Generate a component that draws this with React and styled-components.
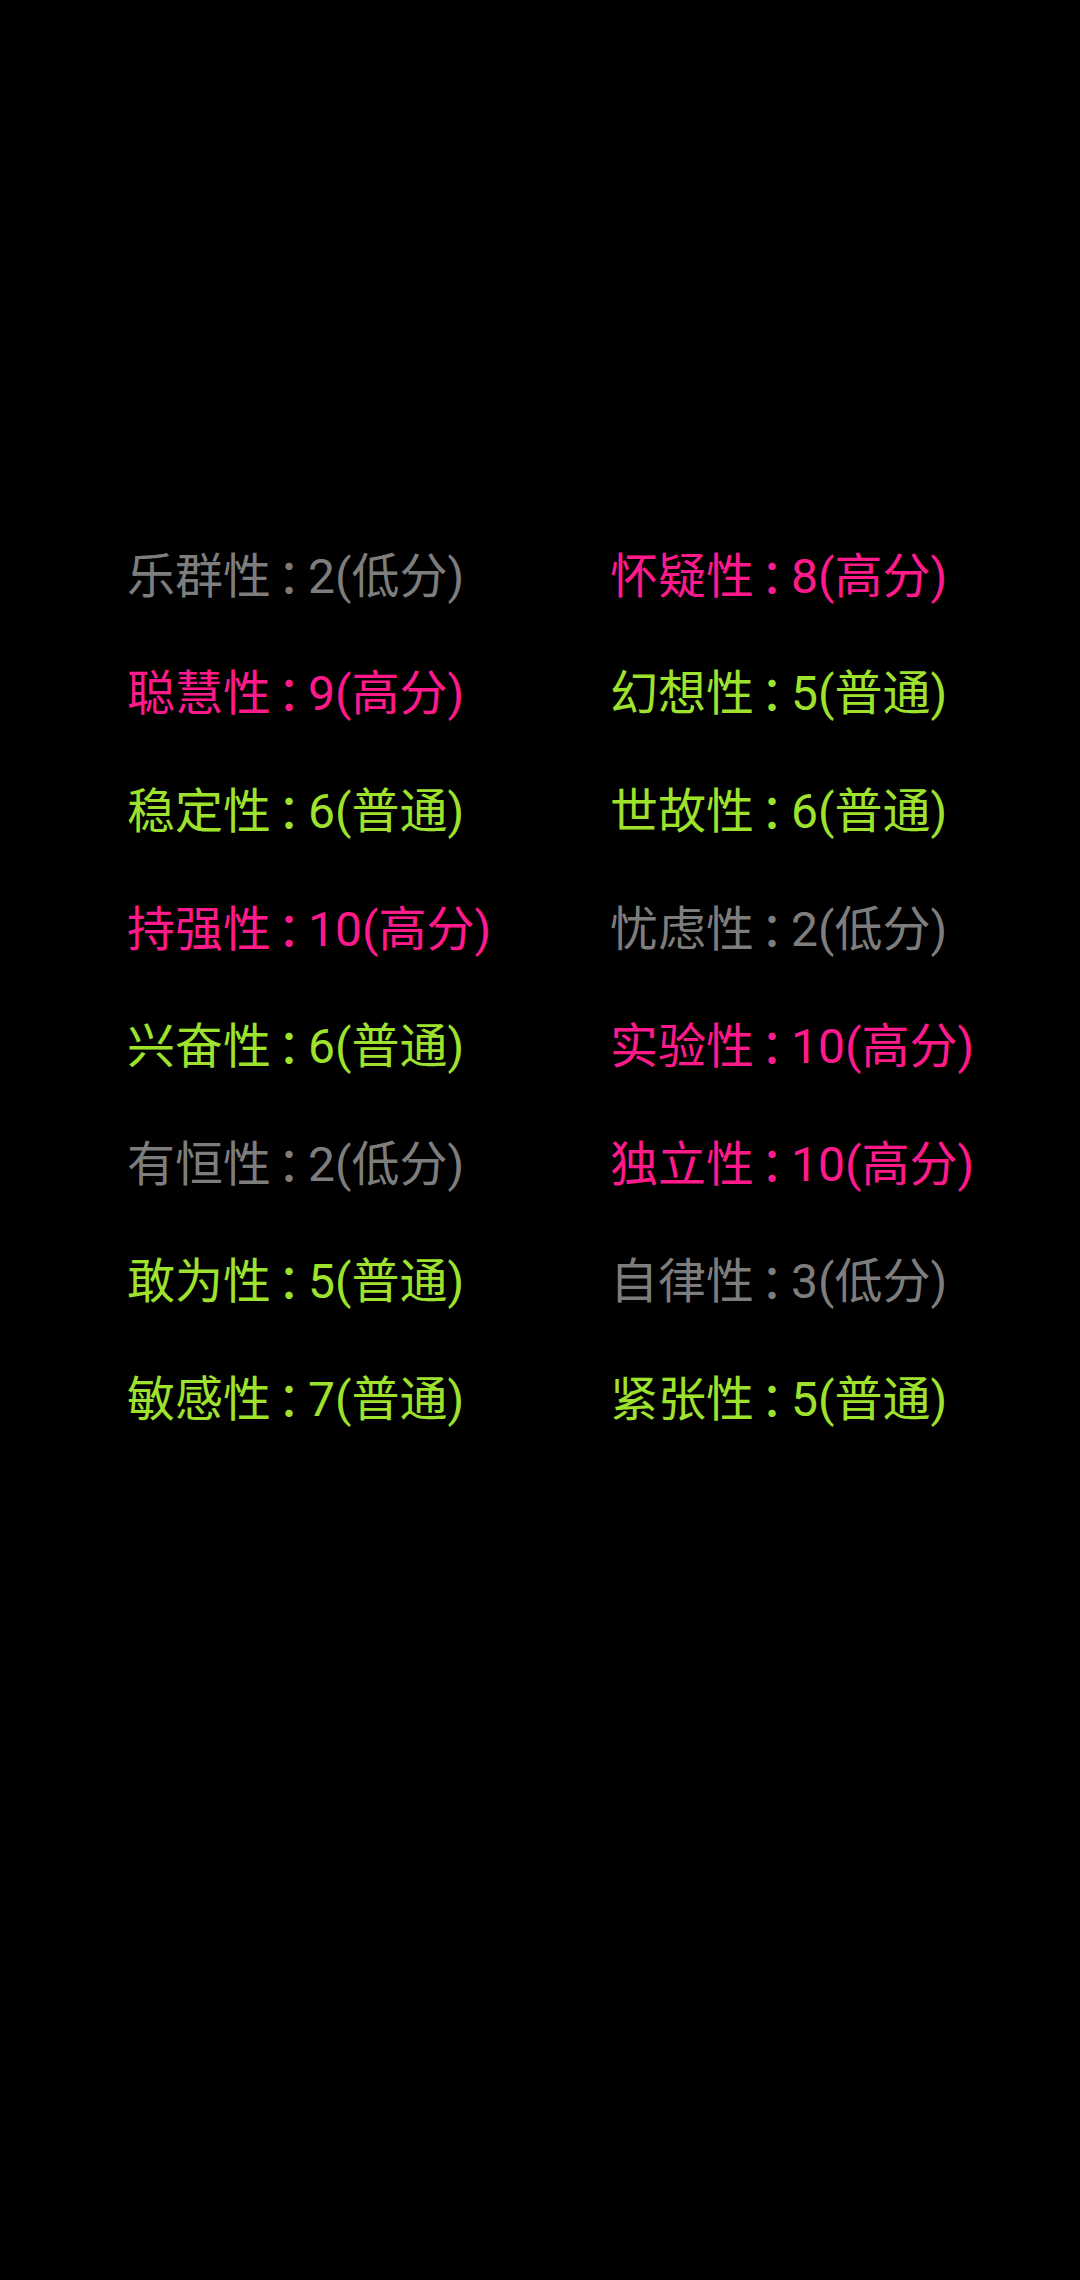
import React from "react";
import styled, { createGlobalStyle } from "styled-components";

const Global = createGlobalStyle`
  html, body { margin: 0; padding: 0; background: #000; }
  body { width: 1080px; height: 2280px; overflow: hidden; }
`;

const Screen = styled.div`
  width: 1080px;
  height: 2280px;
  background: #000;
  box-sizing: border-box;
  padding: 518px 0 0 127px;
`;

const Grid = styled.div`
  display: grid;
  grid-template-columns: 483px 483px;
  grid-auto-rows: 117.6px;
  align-items: center;
`;

const COLORS = {
  low: "#7d7d7d",
  high: "#ff1a8c",
  normal: "#9ee22e",
};

const Trait = styled.div`
  font-family: Roboto, "Noto Sans CJK SC", sans-serif;
  font-size: 48px;
  line-height: 56px;
  white-space: nowrap;
  color: ${(p) => COLORS[p.$level]};
`;

const Colon = styled.span`
  font-feature-settings: "halt" 1;
  margin: 0 7px 0 6px;
`;

const LABEL = { low: "低分", high: "高分", normal: "普通" };

const rows = [
  ["乐群性", 2, "low"], ["怀疑性", 8, "high"],
  ["聪慧性", 9, "high"], ["幻想性", 5, "normal"],
  ["稳定性", 6, "normal"], ["世故性", 6, "normal"],
  ["持强性", 10, "high"], ["忧虑性", 2, "low"],
  ["兴奋性", 6, "normal"], ["实验性", 10, "high"],
  ["有恒性", 2, "low"], ["独立性", 10, "high"],
  ["敢为性", 5, "normal"], ["自律性", 3, "low"],
  ["敏感性", 7, "normal"], ["紧张性", 5, "normal"],
];

export default function App() {
  return (
    <>
      <Global />
      <Screen>
        <Grid>
          {rows.map(([name, score, level]) => (
            <Trait key={name} $level={level}>
              {name}
              <Colon>：</Colon>
              {score}({LABEL[level]})
            </Trait>
          ))}
        </Grid>
      </Screen>
    </>
  );
}
